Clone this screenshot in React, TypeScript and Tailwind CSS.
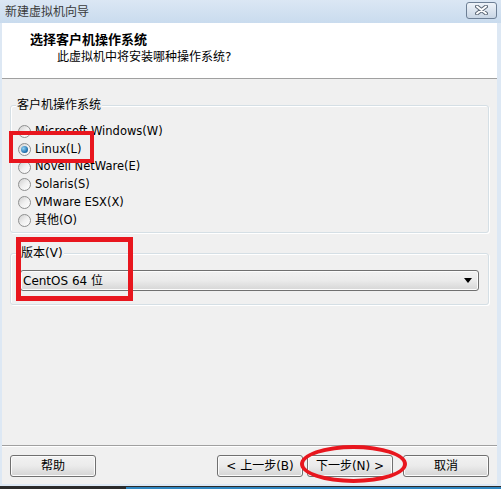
import React from "react";

const cjk = "font-['Tahoma','DejaVu_Sans','Noto_Sans_CJK_SC',sans-serif]";

function Radio({ label, checked }: { label: React.ReactNode; checked?: boolean }) {
  return (
    <div className="flex items-center h-[17.7px] gap-[4px]">
      <span className="w-[13px] h-[13px] rounded-full border border-[#8e8f8f] bg-gradient-to-br from-[#cfcfcf] via-[#f0f0f0] to-white flex items-center justify-center">
        {checked && (
          <span className="w-[7px] h-[7px] rounded-full bg-[radial-gradient(circle_at_35%_35%,#8fd1f5,#1a6aa8_70%,#0d3f6e)]" />
        )}
      </span>
      <span className="text-[11.5px] text-black leading-none">{label}</span>
    </div>
  );
}

function Btn({ label }: { label: string }) {
  return (
    <button className="w-[86px] h-[22px] rounded-[3px] border border-[#707070] bg-gradient-to-b from-[#f2f2f2] via-[#ebebeb] to-[#d4d4d4] text-[12px] text-black flex items-center justify-center shadow-[inset_0_0_0_1px_#fcfcfc]">
      {label}
    </button>
  );
}

export default function App() {
  return (
    <div className={`relative w-[501px] h-[489px] overflow-hidden bg-[#dde8f4] flex flex-col ${cjk}`}>
      {/* title bar */}
      <div className="h-[23px] flex items-center justify-between pl-[5px] pr-[4px] bg-gradient-to-b from-[#dbe7f4] to-[#c9dbee]">
        <span className="text-[12px] text-[#3a3a3a]">新建虚拟机向导</span>
        <div className="w-[31px] h-[17px] mt-[-3px] rounded-[3px] border border-[#6d7f95] bg-gradient-to-b from-[#eef3f9] to-[#c9d6e5] flex items-center justify-center">
          <svg width="13" height="10" viewBox="0 0 13 10">
            <path d="M2 1.5 L11 8.5 M11 1.5 L2 8.5" stroke="#5f6b7a" strokeWidth="4" strokeLinecap="round" />
            <path d="M2 1.5 L11 8.5 M11 1.5 L2 8.5" stroke="#ffffff" strokeWidth="2" strokeLinecap="round" />
          </svg>
        </div>
      </div>

      {/* window body */}
      <div className="flex-1 ml-[2px] mr-[4px] flex flex-col bg-[#f0f0f0] mb-[2px]">
        {/* header */}
        <div className="h-[56px] bg-white border-b border-[#a0a0a0] pl-[28px] pt-[8px] flex flex-col">
          <span className="text-[13px] font-bold text-black leading-[18px]">选择客户机操作系统</span>
          <span className="text-[12px] text-black leading-[16px] pl-[27px]">此虚拟机中将安装哪种操作系统?</span>
        </div>

        {/* content */}
        <div className="flex-1 flex flex-col px-[8px] pt-[26px]">
          <div className="relative border border-[#d5dfe5] rounded-[3px] shadow-[inset_1px_1px_0_#fff,1px_1px_0_#fff] h-[128px] pt-[17px] pl-[7px]">
            <span className="absolute -top-[9px] left-[5px] px-[1px] bg-[#f0f0f0] text-[12px] text-black leading-[16px]">客户机操作系统</span>
            <div className="flex flex-col">
              <Radio label="Microsoft Windows(W)" />
              <Radio label="Linux(L)" checked />
              <Radio label="Novell NetWare(E)" />
              <Radio label="Solaris(S)" />
              <Radio label="VMware ESX(X)" />
              <Radio label={<><span className="text-[12px]">其他</span>(O)</>} />
            </div>
          </div>

          <div className="relative mt-[20px] border border-[#d5dfe5] rounded-[3px] shadow-[inset_1px_1px_0_#fff,1px_1px_0_#fff] h-[52px] pt-[16px] px-[9px]">
            <span className="absolute -top-[9px] left-[9px] px-[1px] bg-[#f0f0f0] text-[12px] text-black leading-[16px]">版本(V)</span>
            <div className="h-[21px] rounded-[3px] border border-[#707070] bg-gradient-to-b from-[#f2f2f2] via-[#ebebeb] to-[#d6d6d6] flex items-center justify-between pl-[2px] pr-[6px] shadow-[inset_0_0_0_1px_#fcfcfc]">
              <span className="text-[12px] text-black">CentOS 64 位</span>
              <svg width="8" height="5" viewBox="0 0 8 5">
                <path d="M0 0 H8 L4 5 Z" fill="#000" />
              </svg>
            </div>
          </div>

          <div className="flex-1" />
          <div className="border-t border-[#a0a0a0] shadow-[0_1px_0_#fff] -mx-[8px]" />
          <div className="h-[38px] flex items-start pt-[9px]">
            <Btn label="帮助" />
            <div className="flex-1" />
            <div className="flex gap-[4px]">
              <Btn label="< 上一步(B)" />
              <Btn label="下一步(N) >" />
            </div>
            <div className="w-[10px]" />
            <Btn label="取消" />
          </div>
        </div>
      </div>

      {/* desktop strip */}
      <div className="h-[3px] flex">
        <div className="w-[126px] bg-[#2b2b2b]" />
        <div className="flex-1 bg-[#2e86c1] border-t border-[#2b2b2b]" />
      </div>

      {/* annotations */}
      <div className="absolute left-[9px] top-[131px] w-[85px] h-[32px] border-[4px] border-[#e8161e]" />
      <div className="absolute left-[16px] top-[237px] w-[117px] h-[64px] border-[5px] border-[#e8161e]" />
      <div className="absolute left-[300px] top-[445px] w-[107px] h-[38px] rounded-[50%] border-[4px] border-[#e8161e]" />
    </div>
  );
}
